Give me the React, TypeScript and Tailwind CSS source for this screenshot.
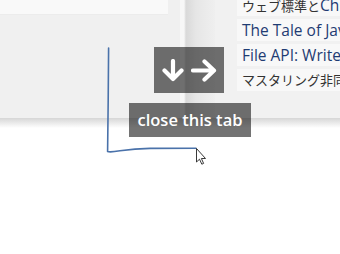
import React from "react";

function DownArrow() {
  return (
    <svg width="24" height="23" viewBox="0 0 24 23" className="block">
      <path d="M12 2 V20 M3.5 11.5 L12 20 L20.5 11.5" fill="none" stroke="white" strokeWidth="4.2" strokeLinecap="round" strokeLinejoin="round" />
    </svg>
  );
}

function RightArrow() {
  return (
    <svg width="26" height="23" viewBox="0 0 26 23" className="block">
      <path d="M2 11.5 H23 M13.5 2.5 L23 11.5 L13.5 20.5" fill="none" stroke="white" strokeWidth="4.2" strokeLinecap="round" strokeLinejoin="round" />
    </svg>
  );
}

export default function App() {
  const font = { fontFamily: '"Open Sans", "Noto Sans CJK JP", sans-serif' };
  return (
    <div className="relative w-[340px] h-[254px] overflow-hidden bg-white" style={font}>
      <div className="flex h-[118px]">
        <div className="w-[180px] shrink-0 bg-[#f0f0f0] flex flex-col">
          <div className="w-[168px] h-[15px] bg-[#f9f9f9] border-b border-[#ececec]" />
        </div>
        <div className="w-[35px] shrink-0 bg-[linear-gradient(to_right,#f7f7f7_0px,#f7f7f7_4px,#d9d9d9_6px,#e6e6e6_16px,#efefef_35px)]" />
        <div className="flex-1 min-w-0 overflow-hidden bg-[#f1f1f1] pl-[22px]">
          <div className="flex flex-col gap-[3px] mt-[-6px] text-[15.5px] leading-[22px] whitespace-nowrap">
            <div className="h-[22px] bg-[#f8f8f8] pl-[5px]"><span className="text-[#333] text-[13px]">ウェブ標準と</span><span className="text-[#1f3c73]">Chrome</span></div>
            <div className="h-[22px] bg-[#f8f8f8] pl-[5px] text-[#1f3c73]">The Tale of JavaScript</div>
            <div className="h-[22px] bg-[#f8f8f8] pl-[5px] text-[#1f3c73]">File API: Writer</div>
            <div className="h-[22px] bg-[#f8f8f8] pl-[5px] text-[#333] text-[13px]">マスタリング非同期</div>
          </div>
        </div>
      </div>
      <div className="h-[10px] bg-[linear-gradient(to_bottom,#d6d6d6,#ffffff)]" />

      <div className="absolute left-[154px] top-[47px] w-[70px] h-[46px] bg-black/55 flex items-center justify-center gap-[6px] pt-[1px]">
        <DownArrow />
        <RightArrow />
      </div>

      <div className="absolute left-[129px] top-[103px] w-[122px] h-[34px] bg-black/55 flex items-center justify-center text-white text-[16.5px] font-semibold">
        close this tab
      </div>

      <svg className="absolute left-0 top-0" width="340" height="254" viewBox="0 0 340 254">
        <path d="M108.6 48 L108.2 100 L107.6 151.5 Q110 152.5 120 150.8 Q135 148.6 150 148.4 L196 148.2" fill="none" stroke="#4a72aa" strokeWidth="1.6" strokeLinejoin="round" strokeLinecap="round" />
        <path d="M196.5 148.5 L196.5 162 L199.5 159.2 L201.8 164.2 L203.6 163.4 L201.4 158.5 L205.5 158.5 Z" fill="white" stroke="#222" strokeWidth="0.9" strokeLinejoin="round" />
      </svg>
    </div>
  );
}
